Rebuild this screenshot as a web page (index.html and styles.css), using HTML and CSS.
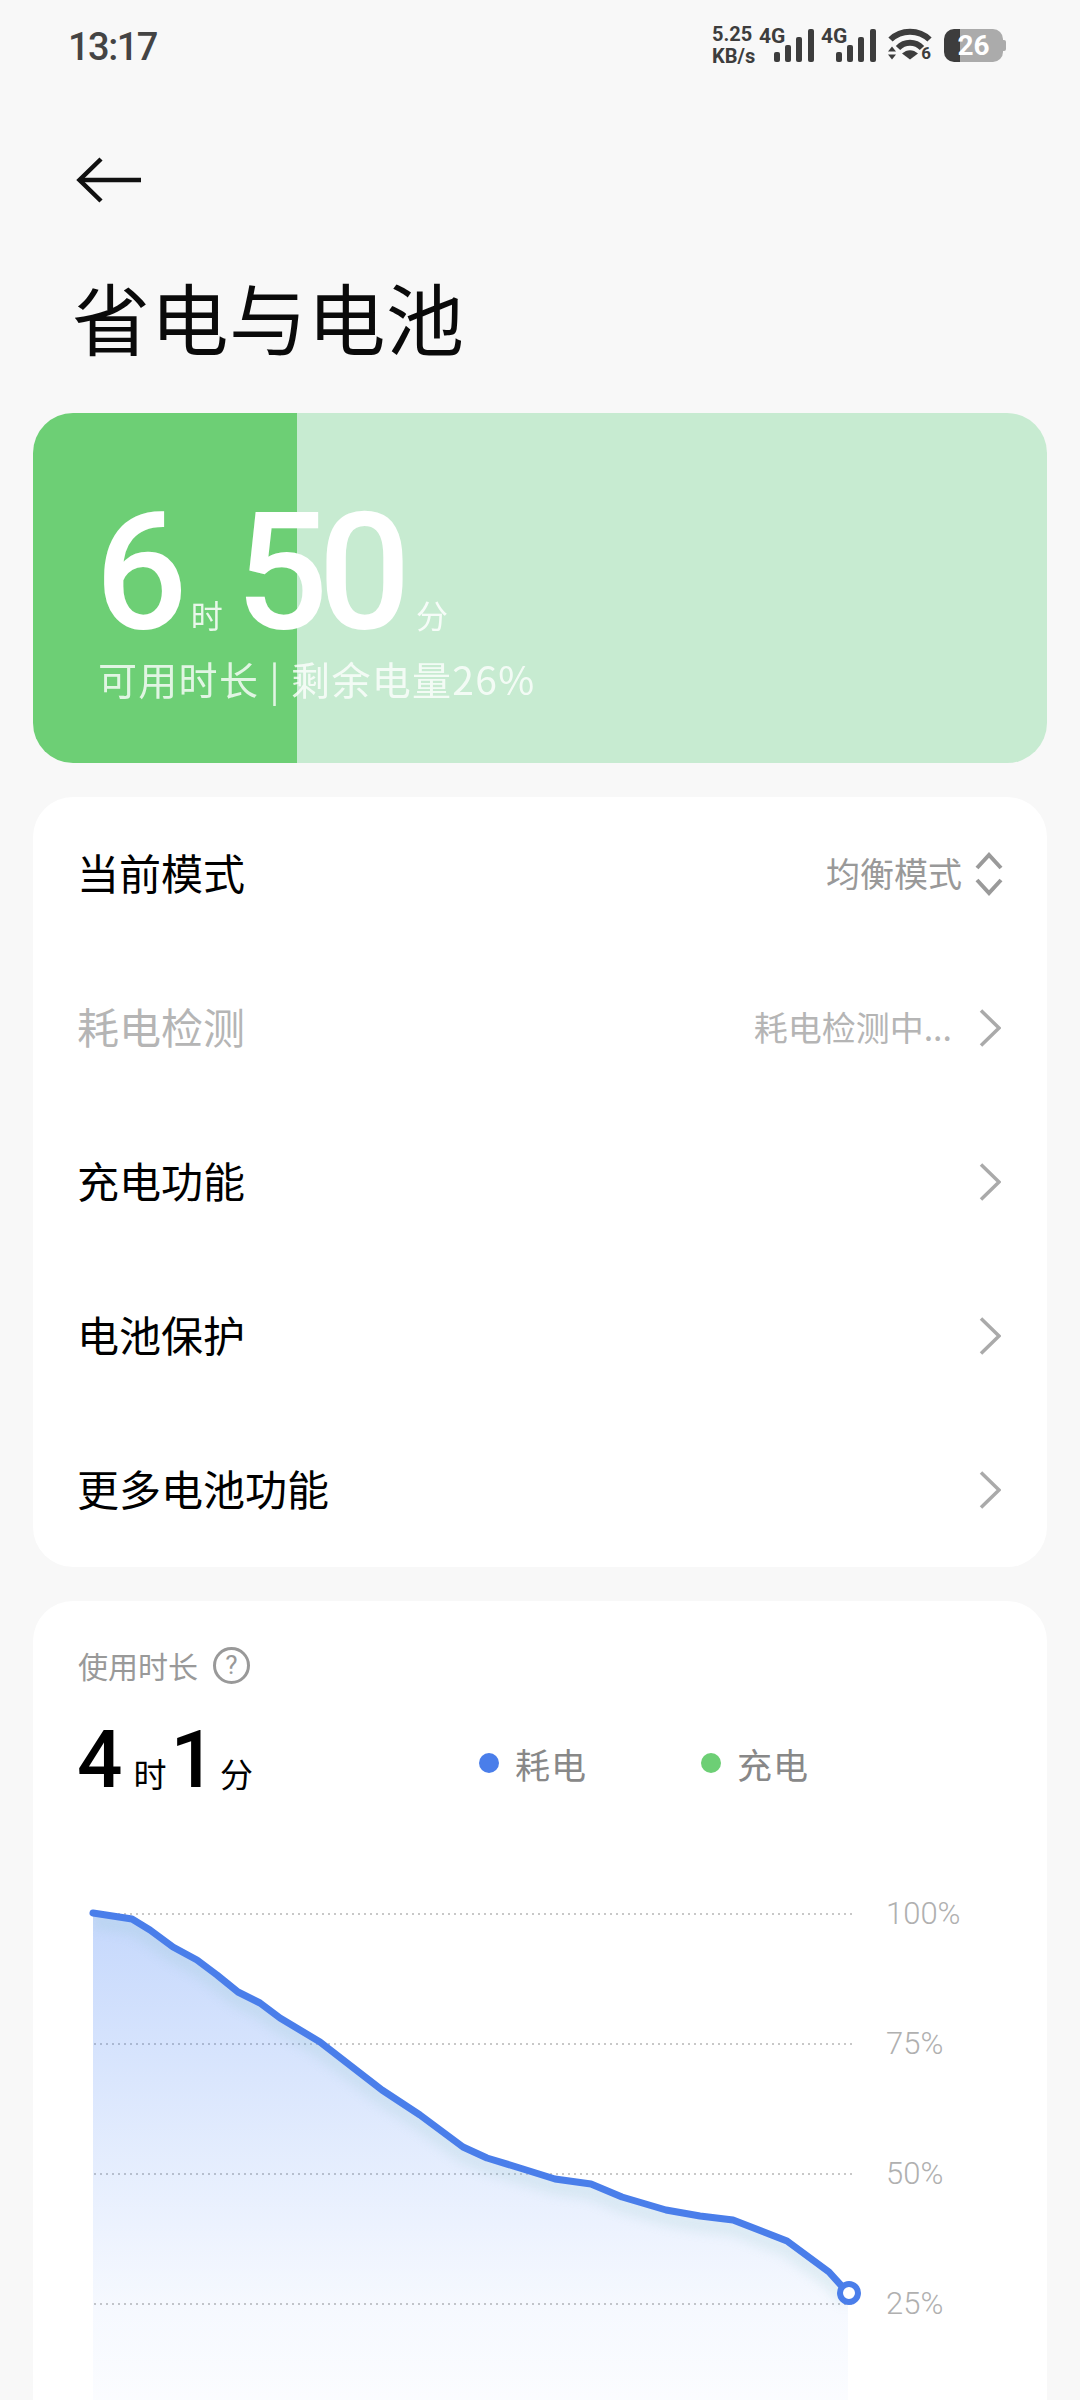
FILE: index.html
```html
<!DOCTYPE html>
<html lang="zh-CN">
<head>
    <meta charset="UTF-8">
    <meta name="viewport" content="width=device-width, initial-scale=1.0">
    <title>省电与电池</title>
    <link rel="stylesheet" href="styles.css">
</head>
<body>
    <div class="status-bar">
        <span class="status-time">13:17</span>
        <div class="status-icons">
            <span class="net-speed">5.25<br>KB/s</span>
            <div class="sim">
                <span class="sim-type">4G</span>
                <svg width="40" height="33" viewBox="0 0 40 33" fill="#3d3d3d"><rect x="0" y="23" width="6" height="10" rx="2"/><rect x="11" y="16" width="6" height="17" rx="2"/><rect x="22" y="8" width="6" height="25" rx="2"/><rect x="34" y="0" width="6" height="33" rx="2"/></svg>
            </div>
            <div class="sim">
                <span class="sim-type">4G</span>
                <svg width="40" height="33" viewBox="0 0 40 33" fill="#3d3d3d"><rect x="0" y="23" width="6" height="10" rx="2"/><rect x="11" y="16" width="6" height="17" rx="2"/><rect x="22" y="8" width="6" height="25" rx="2"/><rect x="34" y="0" width="6" height="33" rx="2"/></svg>
            </div>
            <div class="wifi">
                <svg width="44" height="34" viewBox="0 0 44 34">
                    <path d="M2.500 11.500C13 1 31 1 41.500 11.500" fill="none" stroke="#3d3d3d" stroke-width="6"/>
                    <path d="M10 20C16.500 13 27.500 13 34 20" fill="none" stroke="#3d3d3d" stroke-width="6"/>
                    <path d="M14 25.500C19 21 25 21 30 25.500L22 31.500Z" fill="#3d3d3d"/>
                    <path d="M0 23.500L4 18.500L8 23.500ZM0 26.500H8L4 31.500Z" fill="#3d3d3d"/>
                </svg>
                <span class="wifi-num">6</span>
            </div>
            <div class="battery"><span>26</span></div>
        </div>
    </div>

    <div class="back">
        <svg width="66" height="46" viewBox="0 0 66 46" fill="none" stroke="#111" stroke-width="4.500"><path d="M3 23H65"/><path d="M25 2L3.500 23L25 44"/></svg>
    </div>
    <h1 class="page-title">省电与电池</h1>

    <div class="hero">
        <div class="hero-time">
            <span class="hero-num">6</span>
            <span class="hero-unit unit-hour">时</span>
            <span class="hero-num">50</span>
            <span class="hero-unit unit-min">分</span>
        </div>
        <div class="hero-sub">可用时长 | 剩余电量26%</div>
    </div>

    <div class="card menu">
        <div class="menu-row">
            <span class="menu-label">当前模式</span>
            <span class="menu-value">均衡模式</span>
            <svg class="updown" width="28" height="44" viewBox="0 0 28 44" fill="none" stroke="#9a9a9a" stroke-width="4"><path d="M2 16L14 3L26 16"/><path d="M2 28L14 41L26 28"/></svg>
        </div>
        <div class="menu-row disabled">
            <span class="menu-label">耗电检测</span>
            <span class="menu-value checking">耗电检测中...</span>
            <svg class="chevron" width="22" height="38" viewBox="0 0 22 38" fill="none" stroke="#aaa" stroke-width="3.500"><path d="M2 1.500L20 19L2 36.500"/></svg>
        </div>
        <div class="menu-row">
            <span class="menu-label">充电功能</span>
            <svg class="chevron" width="22" height="38" viewBox="0 0 22 38" fill="none" stroke="#aaa" stroke-width="3.500"><path d="M2 1.500L20 19L2 36.500"/></svg>
        </div>
        <div class="menu-row">
            <span class="menu-label">电池保护</span>
            <svg class="chevron" width="22" height="38" viewBox="0 0 22 38" fill="none" stroke="#aaa" stroke-width="3.500"><path d="M2 1.500L20 19L2 36.500"/></svg>
        </div>
        <div class="menu-row">
            <span class="menu-label">更多电池功能</span>
            <svg class="chevron" width="22" height="38" viewBox="0 0 22 38" fill="none" stroke="#aaa" stroke-width="3.500"><path d="M2 1.500L20 19L2 36.500"/></svg>
        </div>
    </div>

    <div class="card usage">
        <div class="usage-title">
            <span>使用时长</span>
            <span class="help">?</span>
        </div>
        <div class="usage-summary">
            <div class="usage-time">
                <span class="usage-num">4</span>
                <span class="usage-unit unit-first">时</span>
                <span class="usage-num">1</span>
                <span class="usage-unit">分</span>
            </div>
            <div class="legend">
                <span class="legend-dot dot-blue"></span><span class="legend-text">耗电</span>
            </div>
            <div class="legend">
                <span class="legend-dot dot-green"></span><span class="legend-text">充电</span>
            </div>
        </div>
        <svg class="chart" width="1014" height="520" viewBox="33 1880 1014 520">
            <defs>
                <linearGradient id="area" x1="0" y1="0" x2="0" y2="1">
                    <stop offset="0" stop-color="#3d7cf5" stop-opacity="0.3"/>
                    <stop offset="0.5" stop-color="#3d7cf5" stop-opacity="0.14"/>
                    <stop offset="0.8" stop-color="#3d7cf5" stop-opacity="0.05"/>
                    <stop offset="1" stop-color="#3d7cf5" stop-opacity="0.02"/>
                </linearGradient>
                <filter id="soft" x="-5%" y="-5%" width="110%" height="110%"><feGaussianBlur stdDeviation="6"/></filter>
                <clipPath id="area-clip"><path d="M93 1913L132 1919L150 1930L173 1947L197 1960L217 1975L238 1992L260 2003L280 2018L320 2042L360 2073L382 2090L420 2115L463 2147L487 2158L523 2169L555 2179L591 2184L622 2197L666 2210L700 2216L733 2220L787 2241L829 2272L848 2293V2400H93Z"/></clipPath>
            </defs>
            <path class="grid" d="M94 1914H853M94 2044H853M94 2174H853M94 2304H853"/>
            <path d="M93 1913L132 1919L150 1930L173 1947L197 1960L217 1975L238 1992L260 2003L280 2018L320 2042L360 2073L382 2090L420 2115L463 2147L487 2158L523 2169L555 2179L591 2184L622 2197L666 2210L700 2216L733 2220L787 2241L829 2272L848 2293V2400H93Z" fill="url(#area)"/>
            <g clip-path="url(#area-clip)">
                <path class="line-shadow" filter="url(#soft)" d="M93 1921L132 1927L150 1938L173 1955L197 1968L217 1983L238 2000L260 2011L280 2026L320 2050L360 2081L382 2098L420 2123L463 2155L487 2166L523 2177L555 2187L591 2192L622 2205L666 2218L700 2224L733 2228L787 2249L829 2280L848 2301"/>
            </g>
            <path class="line" d="M93 1913L132 1919L150 1930L173 1947L197 1960L217 1975L238 1992L260 2003L280 2018L320 2042L360 2073L382 2090L420 2115L463 2147L487 2158L523 2169L555 2179L591 2184L622 2197L666 2210L700 2216L733 2220L787 2241L829 2272L848 2293"/>
            <circle class="line-end" cx="849" cy="2293" r="9"/>
            <text class="axis" x="886" y="1924">100%</text>
            <text class="axis" x="886" y="2054">75%</text>
            <text class="axis" x="886" y="2184">50%</text>
            <text class="axis" x="886" y="2314">25%</text>
        </svg>
    </div>
</body>
</html>
```

FILE: styles.css
```css
html, body {
    margin: 0;
    padding: 0;
}

body {
    width: 1080px;
    height: 2400px;
    overflow: hidden;
    background-color: #f8f8f8;
    color: #000;
    font-family: "Noto Sans CJK SC", Roboto, sans-serif;
}

.status-bar {
    display: flex;
    justify-content: space-between;
    align-items: center;
    height: 90px;
    padding: 0 75px 0 68px;
    box-sizing: border-box;
}

.status-time {
    padding-top: 3px;
    font-family: Roboto, sans-serif;
    font-size: 38px;
    font-weight: 500;
    letter-spacing: -1.5px;
    color: #444;
}

.status-icons {
    display: flex;
    align-items: center;
    color: #3d3d3d;
    font-family: Roboto, sans-serif;
    font-weight: 700;
}

.net-speed {
    font-size: 20px;
    line-height: 22px;
    width: 47px;
}

.sim {
    position: relative;
    width: 55px;
    height: 33px;
    margin-right: 7px;
    text-align: right;
}

.sim-type {
    position: absolute;
    left: 0;
    top: -4px;
    font-size: 21px;
    line-height: 22px;
}

.wifi {
    position: relative;
    width: 44px;
    height: 34px;
    margin-left: 5px;
    margin-right: 12px;
}

.wifi-num {
    position: absolute;
    right: 1px;
    bottom: 0;
    font-size: 17px;
    line-height: 17px;
}

.battery {
    position: relative;
    width: 59px;
    height: 33px;
    margin-right: 2px;
    border-radius: 10px;
    background: linear-gradient(90deg, #3d3d3d 16px, #ababab 16px);
    color: #fff;
    font-size: 28px;
    line-height: 33px;
    text-align: center;
}

.battery span {
    display: block;
}

.battery::after {
    content: "";
    position: absolute;
    right: -3px;
    top: 11px;
    width: 3px;
    height: 11px;
    border-radius: 0 2px 2px 0;
    background-color: #ababab;
}

.back {
    margin-top: 67px;
    padding-left: 76px;
    height: 46px;
}

.page-title {
    margin: 68px 0 0 72px;
    font-size: 78px;
    font-weight: 400;
    line-height: 90px;
    letter-spacing: 0.5px;
    color: #0a0a0a;
}

.hero {
    height: 350px;
    margin: 52px 33px 0;
    padding: 100px 0 0 62px;
    box-sizing: border-box;
    border-radius: 40px;
    background: linear-gradient(90deg, #6dcf75 26%, #c7ebd1 26%);
    color: #fff;
}

.hero-time {
    display: flex;
    align-items: baseline;
}

.hero-num {
    font-family: Roboto, sans-serif;
    font-size: 163px;
    font-weight: 500;
    line-height: 120px;
    letter-spacing: -10px;
}

.hero-unit {
    font-size: 32px;
    line-height: 40px;
    opacity: 0.85;
}

.unit-hour {
    margin: 0 13px 0 13px;
}

.unit-min {
    margin-left: 15px;
}

.hero-sub {
    margin: 19px 0 0 3px;
    font-size: 39px;
    line-height: 50px;
    letter-spacing: 1.3px;
    opacity: 0.8;
}

.card {
    margin: 34px 33px 0;
    border-radius: 40px;
    background-color: #fff;
}

.menu-row {
    display: flex;
    align-items: center;
    height: 154px;
    padding: 0 46px 0 44px;
}

.menu-label {
    flex: 1;
    padding-bottom: 5px;
    font-size: 42px;
    color: #000;
}

.menu-value {
    padding-bottom: 4px;
    font-size: 34px;
    color: #999;
}

.updown {
    margin-left: 13px;
    margin-right: -2px;
}

.checking {
    margin-right: 27px;
    color: #b5b5b5;
}

.disabled .menu-label {
    color: #b5b5b5;
}

.usage {
    height: 900px;
    padding-top: 44px;
    box-sizing: border-box;
}

.usage-title {
    display: flex;
    align-items: center;
    height: 40px;
    padding-left: 45px;
    font-size: 30px;
    color: #999;
}

.help {
    width: 31px;
    height: 31px;
    margin-left: 15px;
    border: 3px solid #999;
    border-radius: 50%;
    font-family: Roboto, sans-serif;
    font-size: 26px;
    line-height: 31px;
    text-align: center;
    color: #999;
}

.usage-summary {
    display: flex;
    align-items: center;
    height: 70px;
    margin-top: 40px;
    padding-left: 44px;
}

.usage-time {
    display: flex;
    align-items: baseline;
    width: 402px;
}

.usage-num {
    font-family: Roboto, sans-serif;
    font-size: 80px;
    font-weight: 500;
    line-height: 70px;
}

.usage-unit {
    margin-left: 4px;
    font-size: 33px;
    line-height: 40px;
}

.unit-first {
    margin: 0 4px 0 11px;
}

.legend {
    display: flex;
    align-items: center;
    width: 222px;
    margin-top: 6px;
}

.legend-dot {
    width: 20px;
    height: 20px;
    margin-right: 16px;
    border-radius: 50%;
}

.dot-blue {
    background-color: #4a7eea;
}

.dot-green {
    background-color: #6dcf75;
}

.legend-text {
    font-size: 35px;
    letter-spacing: 1px;
    color: #888;
}

.chart {
    display: block;
    margin-top: 85px;
}

.grid {
    fill: none;
    stroke: #c8c8c8;
    stroke-width: 2;
    stroke-dasharray: 2 4;
}

.line {
    fill: none;
    stroke: #4a7eea;
    stroke-width: 7;
    stroke-linecap: round;
    stroke-linejoin: round;
}

.line-shadow {
    fill: none;
    stroke: #8fc4c4;
    stroke-width: 14;
    opacity: 0.2;
}

.line-end {
    fill: #fff;
    stroke: #4a7eea;
    stroke-width: 6;
}

.axis {
    font-family: Roboto, sans-serif;
    font-size: 31px;
    font-weight: 300;
    fill: #b0b0b0;
}
```
